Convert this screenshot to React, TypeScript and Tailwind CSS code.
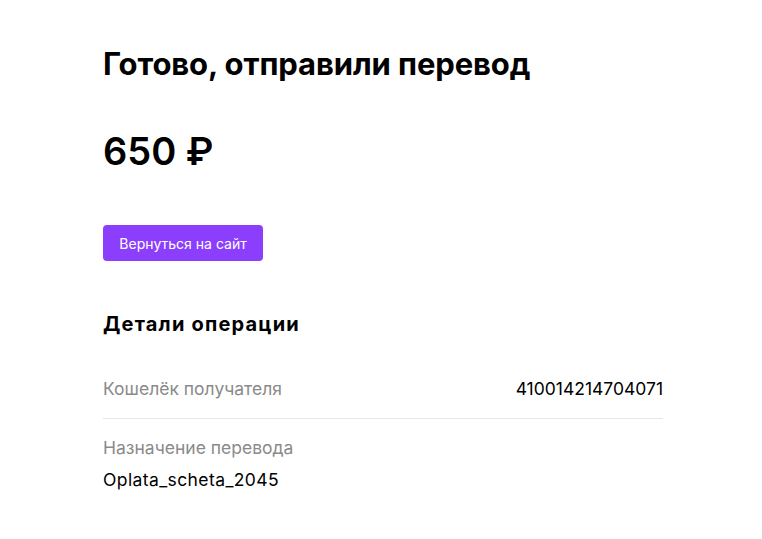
import React from 'react';

const App = () => {
  return (
    <div className="min-h-screen bg-white text-black" style={{ fontFamily: 'Inter, "Noto Sans", sans-serif' }}>
      <div className="ml-[103px] w-[560px] pt-[44px]">
        <h1 className="text-[31px] font-bold leading-[40px] tracking-[-0.1px]">Готово, отправили перевод</h1>
        <div className="mt-[43px] text-[38px] font-semibold leading-[48px]">650 ₽</div>
        <button className="mt-[50px] h-9 w-[160px] rounded-[4px] bg-[#8b3ffd] text-[14px] text-white">
          Вернуться на сайт
        </button>
        <h2 className="mt-[51px] text-[20px] font-bold leading-6 tracking-[1.2px]">Детали операции</h2>
        <div className="mt-[41px] flex items-center justify-between border-b border-[#e6e6e6] pb-[17px]">
          <span className="text-[17.5px] leading-6 text-[#8a8a8a]">Кошелёк получателя</span>
          <span className="text-[17.5px] leading-6">410014214704071</span>
        </div>
        <div className="pt-[17px]">
          <div className="text-[17.5px] leading-6 text-[#8a8a8a]">Назначение перевода</div>
          <div className="mt-[8px] text-[17.5px] leading-6 tracking-[0.4px]">Oplata_scheta_2045</div>
        </div>
      </div>
    </div>
  );
};

export default App;
